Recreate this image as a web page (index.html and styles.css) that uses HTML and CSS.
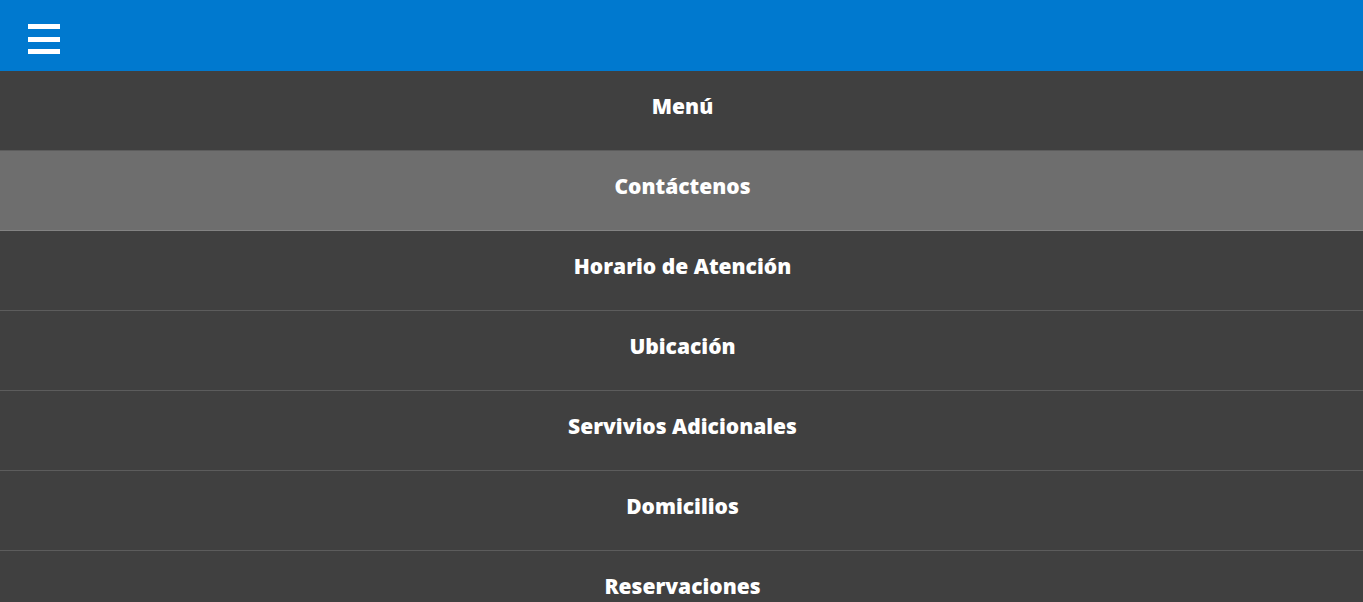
FILE: index.html
```html
<!DOCTYPE html>
<html lang="es">
<head>
<meta charset="utf-8">
<title>Menú</title>
<link rel="stylesheet" href="styles.css">
</head>
<body>
<header class="topbar">
  <button class="burger" aria-label="Abrir menú">
    <span class="bar"></span>
    <span class="bar bar-mid"></span>
    <span class="bar"></span>
  </button>
</header>
<nav class="nav">
  <a class="nav-item" href="#">Menú</a>
  <a class="nav-item active" href="#">Contáctenos</a>
  <a class="nav-item" href="#">Horario de Atención</a>
  <a class="nav-item" href="#">Ubicación</a>
  <a class="nav-item" href="#">Servivios Adicionales</a>
  <a class="nav-item" href="#">Domicilios</a>
  <a class="nav-item" href="#">Reservaciones</a>
</nav>
</body>
</html>
```
FILE: styles.css
```css
html, body {
  margin: 0;
  padding: 0;
  background: #404040;
  overflow: hidden;
}
body {
  font-family: "Open Sans", "Noto Sans", sans-serif;
}
.topbar {
  height: 71px;
  background: #0079cf;
  display: flex;
  align-items: flex-start;
  padding-left: 28px;
  box-sizing: border-box;
}
.burger {
  margin-top: 24px;
  padding: 0;
  border: 0;
  background: none;
  display: flex;
  flex-direction: column;
  gap: 7.5px;
  cursor: pointer;
}
.bar {
  display: block;
  width: 32px;
  height: 5px;
  background: #ffffff;
}
.nav {
  display: flex;
  flex-direction: column;
}
.nav-item {
  display: flex;
  justify-content: center;
  align-items: flex-start;
  box-sizing: border-box;
  height: 80px;
  padding-top: 21px;
  padding-left: 2px;
  border-bottom: 1px solid rgba(255, 255, 255, 0.15);
  background: #404040;
  color: #ffffff;
  text-decoration: none;
  font-size: 21px;
  font-weight: 800;
  line-height: 28px;
  letter-spacing: 0;
}
.nav-item.active {
  background: #6e6e6e;
}
```
